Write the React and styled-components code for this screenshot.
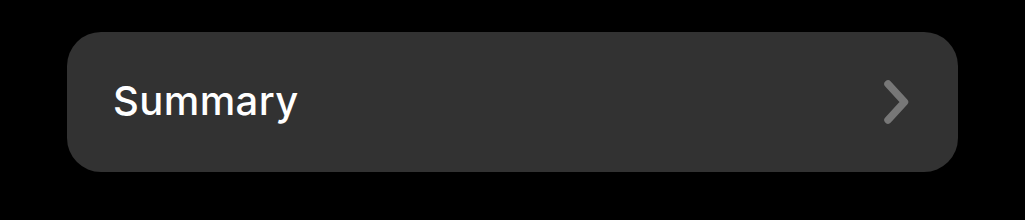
import React from "react";
import styled, { createGlobalStyle } from "styled-components";

const GlobalStyle = createGlobalStyle`
  html, body {
    margin: 0;
    padding: 0;
    background: #000000;
  }
  body {
    font-family: Inter, "Noto Sans", sans-serif;
  }
`;

const Page = styled.div`
  width: 1025px;
  height: 220px;
  box-sizing: border-box;
  padding: 32px 67px 0 67px;
  background: #000000;
`;

const Row = styled.button`
  width: 891px;
  height: 140px;
  box-sizing: border-box;
  display: flex;
  align-items: center;
  justify-content: space-between;
  padding: 0 48px 0 46px;
  border: none;
  border-radius: 34px;
  background: #323232;
  cursor: pointer;
  font-family: inherit;
`;

const Label = styled.span`
  color: #ffffff;
  font-size: 40px;
  font-weight: 500;
  letter-spacing: 0.4px;
  margin-top: -3px;
`;

const Chevron = () => (
  <svg width="28" height="46" viewBox="0 0 28 46" fill="none">
    <path
      d="M6 5 L22.5 23 L6 41"
      stroke="#777777"
      strokeWidth="7.5"
      strokeLinecap="round"
      strokeLinejoin="round"
    />
  </svg>
);

export default function App() {
  return (
    <>
      <GlobalStyle />
      <Page>
        <Row>
          <Label>Summary</Label>
          <Chevron />
        </Row>
      </Page>
    </>
  );
}
